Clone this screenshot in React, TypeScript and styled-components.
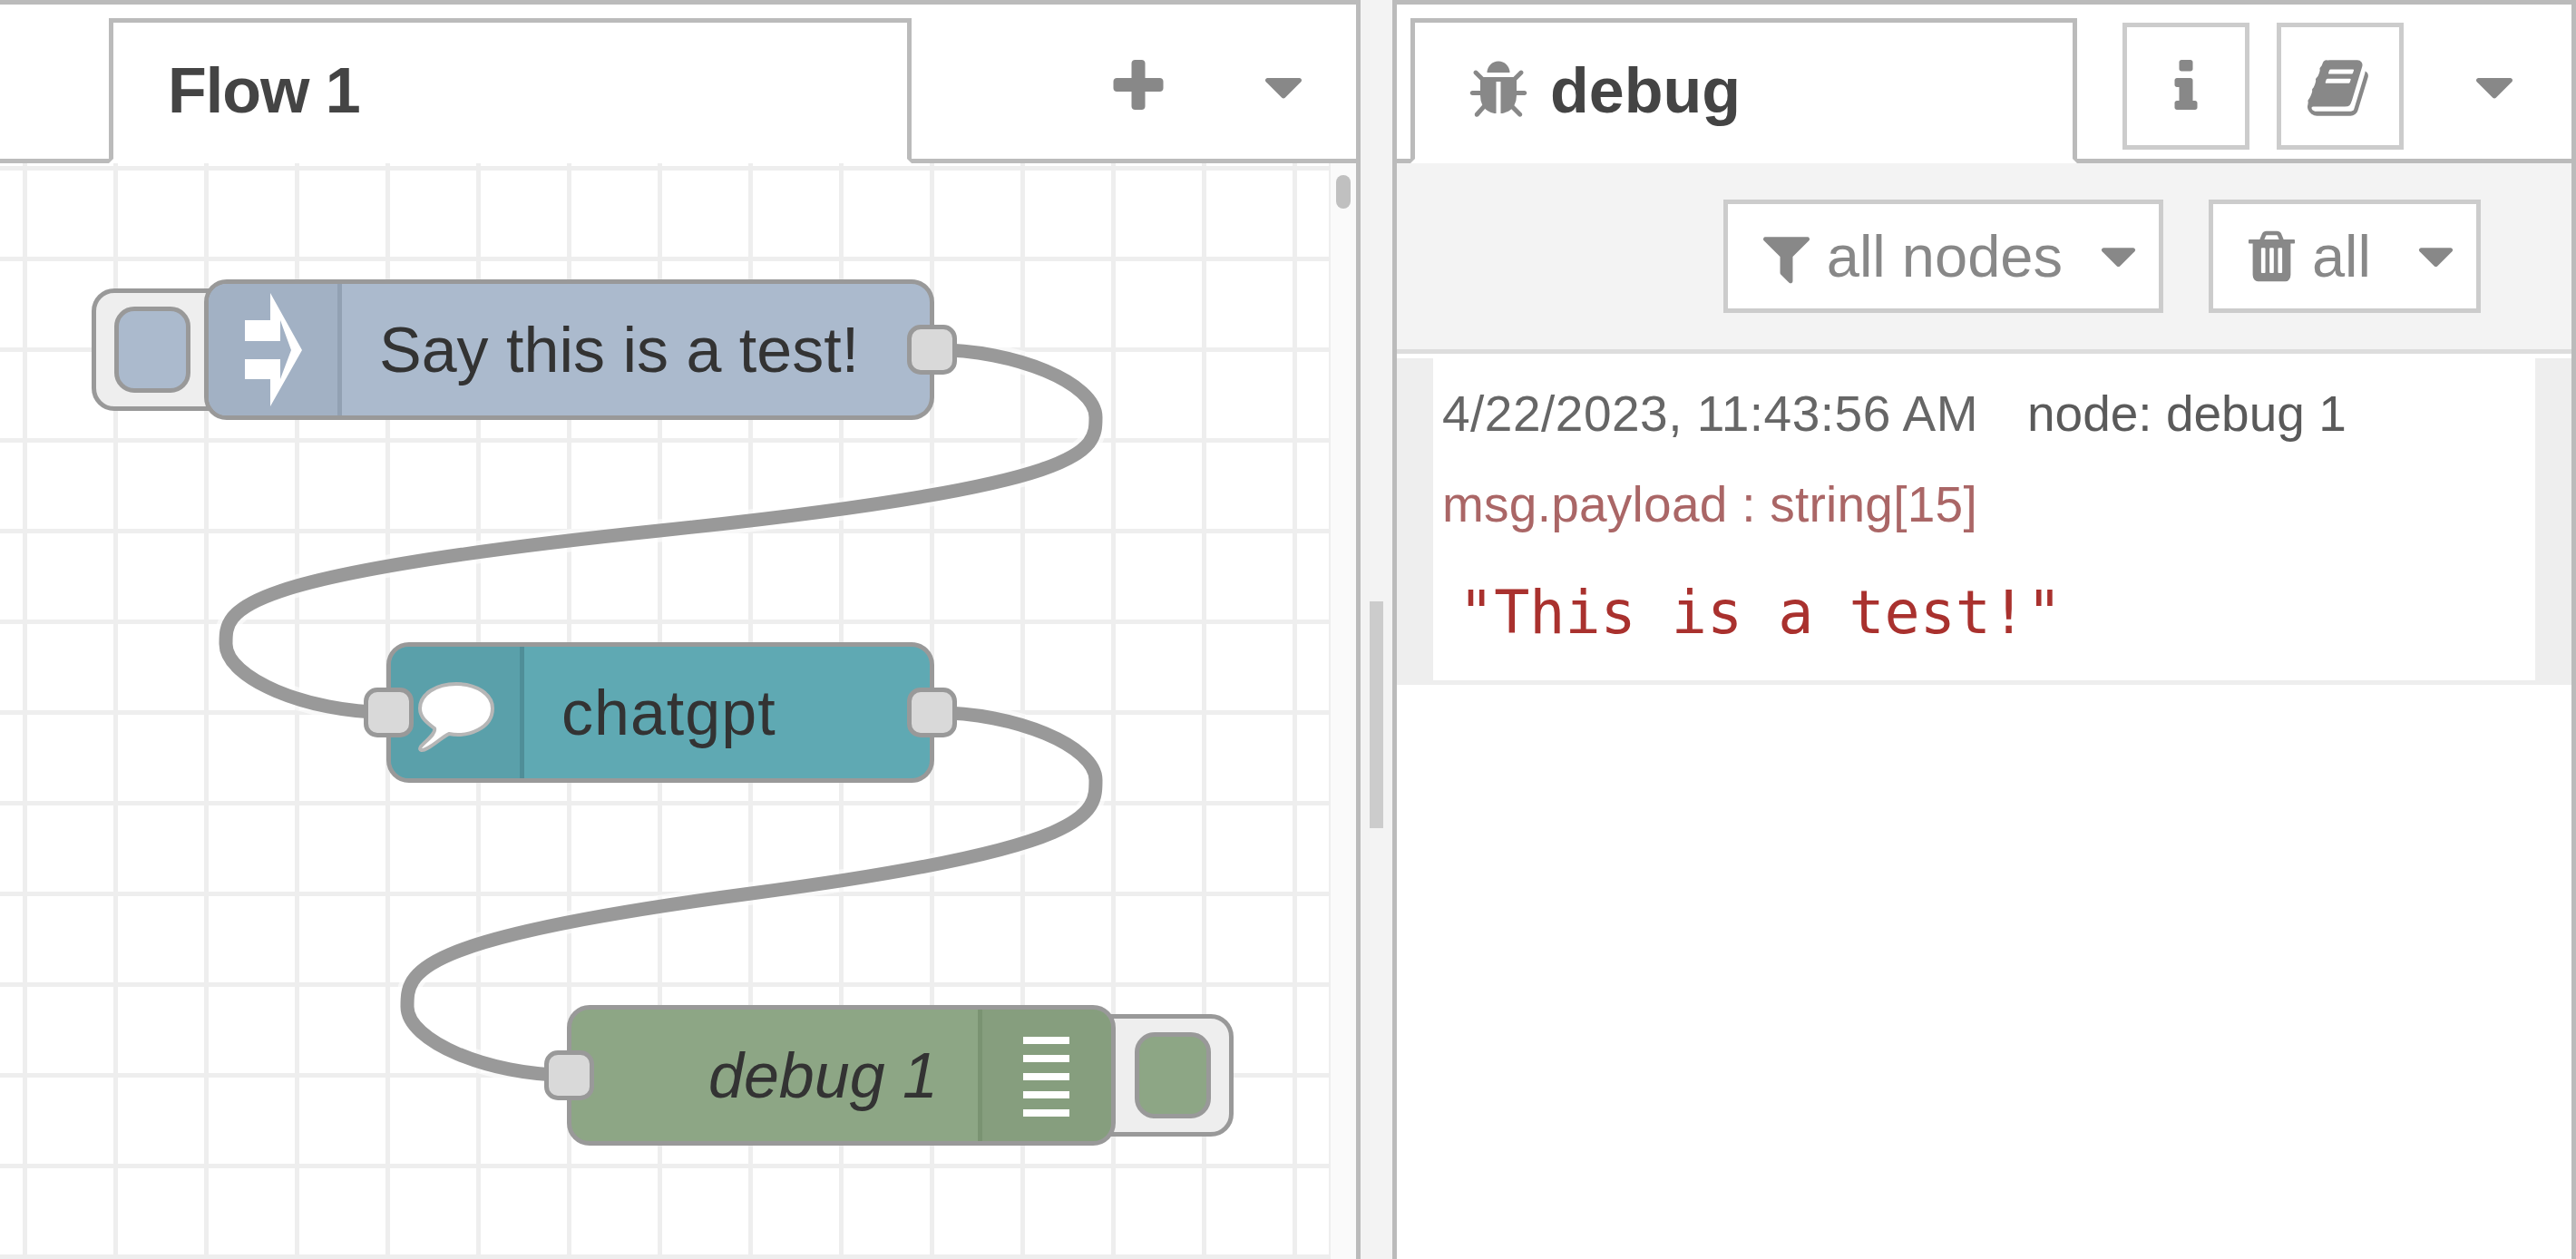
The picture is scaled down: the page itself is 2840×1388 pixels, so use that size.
import styled, { createGlobalStyle } from 'styled-components';

const GlobalStyle = createGlobalStyle`
  html, body {
    margin: 0;
    height: 100%;
    background: #fff;
    overflow: hidden;
  }
  body {
    font-family: "Liberation Sans", Arial, sans-serif;
  }
  * {
    box-sizing: border-box;
  }
`;

const Page = styled.div`
  display: flex;
  width: 2840px;
  height: 1388px;
`;

const Workspace = styled.section`
  width: 1500px;
  display: flex;
  flex-direction: column;
  border-right: 5px solid #bbb;
`;

const Sidebar = styled.section`
  width: 1305px;
  display: flex;
  flex-direction: column;
  border-left: 5px solid #bbb;
  border-right: 5px solid #bbb;
`;

const Separator = styled.div`
  width: 35px;
  background: #f3f3f3;
  padding: 188px 0 0 10px;
  display: flex;
  align-items: center;
`;

const SeparatorHandle = styled.div`
  width: 15px;
  height: 250px;
  background: #ccc;
`;

const TabBar = styled.header<{ $inset: number }>`
  height: 180px;
  flex: none;
  display: flex;
  align-items: center;
  padding: 10px 0 0 ${(p) => p.$inset}px;
  border-top: 5px solid #bbb;
  border-bottom: 5px solid #bbb;
  background: #fff;
`;

const Tab = styled.div<{ $width: number; $pad: number; $tracking?: number }>`
  width: ${(p) => p.$width}px;
  height: 160px;
  align-self: flex-end;
  margin-bottom: -5px;
  display: flex;
  align-items: center;
  gap: 22px;
  padding-left: ${(p) => p.$pad}px;
  border: 5px solid #bbb;
  border-bottom-color: #fff;
  background: #fff;
  color: #444;
  font-size: 70px;
  font-weight: 700;
  letter-spacing: ${(p) => p.$tracking ?? 0}px;
  position: relative;
`;

const Icon = styled.svg<{ $size?: number; $left?: number; $top?: number }>`
  width: ${(p) => p.$size ?? 70}px;
  height: ${(p) => p.$size ?? 70}px;
  flex: none;
  fill: #888;
  margin-left: ${(p) => p.$left ?? 0}px;
  margin-top: ${(p) => p.$top ?? 0}px;
`;

const TabIconButton = styled.div<{ $left: number }>`
  width: 140px;
  height: 140px;
  margin-left: ${(p) => p.$left}px;
  display: flex;
  align-items: center;
  justify-content: center;
  border: 5px solid #ccc;
  margin-bottom: 0;
  align-self: flex-start;
  margin-top: 10px;
`;

const Chart = styled.div`
  flex: 1;
  display: flex;
  min-height: 0;
`;

const Canvas = styled.div`
  position: relative;
  width: 1465px;
  overflow: hidden;
  background-color: #fff;
  background-image: linear-gradient(to right, #eee 5px, transparent 5px),
    linear-gradient(to bottom, #eee 5px, transparent 5px);
  background-size: 100px 100px;
  background-position: 25px 0, 0 3px;
`;

const ScrollTrack = styled.div`
  flex: 1;
  background: #fafafa;
  border-left: 2px solid #eee;
  padding: 13px 0 0 6px;
`;

const ScrollThumb = styled.div`
  width: 16px;
  height: 37px;
  border-radius: 8px;
  background: #c0c0c0;
`;

const Wires = styled.svg`
  position: absolute;
  left: 0;
  top: 0;
  width: 1465px;
  height: 1208px;
  fill: none;
`;

const WireOutline = styled.path`
  stroke: #fff;
  stroke-width: 25;
  opacity: 0.6;
`;

const WireLine = styled.path`
  stroke: #999;
  stroke-width: 15;
`;

const NodeFrame = styled.div<{ $x: number; $y: number; $width: number }>`
  position: absolute;
  left: ${(p) => p.$x}px;
  top: ${(p) => p.$y}px;
  width: ${(p) => p.$width}px;
  height: 155px;
`;

const NodeBody = styled.div<{ $fill: string }>`
  position: relative;
  height: 100%;
  display: flex;
  overflow: hidden;
  border: 5px solid #999;
  border-radius: 25px;
  background: ${(p) => p.$fill};
`;

const NodeIconCell = styled.div<{ $fill: string; $line: string; $right?: boolean }>`
  width: 147px;
  flex: none;
  background: ${(p) => p.$fill};
  border-${(p) => (p.$right ? 'left' : 'right')}: 5px solid ${(p) => p.$line};
  svg {
    display: block;
    width: 142px;
    height: 145px;
  }
`;

const NodeLabel = styled.div<{ $italic?: boolean; $tracking?: number }>`
  flex: 1;
  display: flex;
  align-items: center;
  justify-content: ${(p) => (p.$italic ? 'flex-end' : 'flex-start')};
  padding: ${(p) => (p.$italic ? '0 44px 0 0' : '0 0 0 41px')};
  color: #333;
  font-size: 70px;
  font-style: ${(p) => (p.$italic ? 'italic' : 'normal')};
  letter-spacing: ${(p) => p.$tracking ?? 0}px;
  white-space: nowrap;
`;

const Port = styled.div<{ $side: 'left' | 'right' }>`
  position: absolute;
  top: 50px;
  ${(p) => p.$side}: -25px;
  width: 55px;
  height: 55px;
  border: 5px solid #999;
  border-radius: 15px;
  background: #d9d9d9;
`;

const NodeButton = styled.div<{ $side: 'left' | 'right' }>`
  position: absolute;
  top: 10px;
  ${(p) => p.$side}: ${(p) => (p.$side === 'left' ? -124 : -130)}px;
  width: 170px;
  height: 135px;
  display: flex;
  justify-content: ${(p) => (p.$side === 'left' ? 'flex-start' : 'flex-end')};
  padding: 15px 20px;
  border: 5px solid #999;
  border-radius: 25px;
  background: #eee;
`;

const NodeButtonFace = styled.div<{ $fill: string }>`
  width: 84px;
  height: 95px;
  border: 5px solid #999;
  border-radius: 22px;
  background: ${(p) => p.$fill};
`;

const Toolbar = styled.div`
  height: 210px;
  flex: none;
  display: flex;
  justify-content: flex-end;
  gap: 50px;
  padding: 40px 100px 0 0;
  background: #f3f3f3;
  border-bottom: 5px solid #ddd;
`;

const FilterButton = styled.div`
  height: 125px;
  display: flex;
  align-items: center;
  padding: 0 12px 0 32px;
  gap: 12px;
  border: 5px solid #ccc;
  background: #fff;
  color: #888;
  font-size: 65px;
  white-space: nowrap;
`;

const Messages = styled.div`
  flex: 1;
  padding-top: 5px;
  background: #fff;
`;

const Message = styled.article`
  height: 360px;
  padding: 31px 0 0 10px;
  border-left: 40px solid #eee;
  border-right: 40px solid #eee;
  border-bottom: 5px solid #eee;
  font-size: 55px;
`;

const MessageMeta = styled.div`
  height: 60px;
  line-height: 60px;
  margin-bottom: 40px;
  color: #666;
  letter-spacing: 0.5px;
  white-space: nowrap;
`;

const MessageNode = styled.span`
  margin-left: 54px;
  color: #5a5a5a;
  letter-spacing: 0;
`;

const MessageTopic = styled.div`
  height: 60px;
  line-height: 60px;
  margin-bottom: 55px;
  color: #a66;
  letter-spacing: 0.25px;
  white-space: nowrap;
`;

const MessageValue = styled.div`
  height: 70px;
  line-height: 70px;
  padding-left: 18px;
  color: #a9312e;
  font-family: "DejaVu Sans Mono", "Liberation Mono", monospace;
  font-size: 65px;
  white-space: pre;
`;

const plus =
  'M1600 736v192q0 40-28 68t-68 28h-416v416q0 40-28 68t-68 28h-192q-40 0-68-28t-28-68v-416h-416q-40 0-68-28t-28-68v-192q0-40 28-68t68-28h416v-416q0-40 28-68t68-28h192q40 0 68 28t28 68v416h416q40 0 68 28t28 68z';
const caret =
  'M1408 704q0 26-19 45l-448 448q-19 19-45 19t-45-19l-448-448q-19-19-19-45t19-45 45-19h896q26 0 45 19t19 45z';
const bug =
  'M1696 960q0 26-19 45t-45 19h-224q0 171-67 290l208 209q19 19 19 45t-19 45q-18 19-45 19t-45-19l-198-197q-5 5-15 13t-42 28.5-65 36.5-82 29-97 13v-896h-128v896q-51 0-101.500-13.500t-87-33-66-39-43.500-32.500l-15-14-183 207q-20 21-48 21-24 0-43-16-19-18-20.500-44.500t15.500-46.500l202-227q-58-114-58-274h-224q-26 0-45-19t-19-45 19-45 45-19h224v-294l-173-173q-19-19-19-45t19-45 45-19 45 19l173 173h844l173-173q19-19 45-19t45 19 19 45-19 45l-173 173v294h224q26 0 45 19t19 45zm-480-576h-640q0-133 93.500-226.500t226.500-93.500 226.500 93.500 93.500 226.500z';
const info =
  'M1216 1344v128q0 26-19 45t-45 19h-512q-26 0-45-19t-19-45v-128q0-26 19-45t45-19h64v-384h-64q-26 0-45-19t-19-45v-128q0-26 19-45t45-19h384q26 0 45 19t19 45v576h64q26 0 45 19t19 45zm-128-1152v192q0 26-19 45t-45 19h-256q-26 0-45-19t-19-45v-192q0-26 19-45t45-19h256q26 0 45 19t19 45z';
const book =
  'M1639 478q40 57 18 129l-275 906q-19 64-76.500 107.500t-122.500 43.500h-923q-77 0-148.500-53.500t-99.500-131.500q-24-67-2-127 0-4 3-27t4-37q1-8-3-21.500t-3-19.500q2-11 8-21t16.500-23.500 16.500-23.500q23-38 45-91.500t30-91.500q3-10 .5-30t-.5-28q3-11 17-28t17-23q21-36 42-92t25-90q1-9-2.500-32t.5-28q4-13 22-30.500t22-22.500q19-26 42.500-84.500t27.500-96.500q1-8-3-25.500t-2-26.500q2-8 9-18t18-23 17-21q8-12 16.500-30.500t15-35 16-36 19.500-32 26.500-23.500 36-11.500 47.500 5.500l-1 3q38-9 51-9h761q74 0 114 56t18 130l-274 906q-36 119-71.500 153.500t-128.500 34.500h-869q-27 0-38 15-11 16-1 43 24 70 144 70h923q29 0 56-15.500t35-41.500l300-987q7-22 5-57 38 15 59 43zm-1064 2q-4 13 2 22.500t20 9.500h608q13 0 25.500-9.500t16.500-22.500l21-64q4-13-2-22.500t-20-9.500h-608q-13 0-25.500 9.500t-16.500 22.500zm-83 256q-4 13 2 22.500t20 9.500h608q13 0 25.500-9.500t16.500-22.500l21-64q4-13-2-22.500t-20-9.500h-608q-13 0-25.500 9.500t-16.500 22.500z';
const filter =
  'M1595 295q17 41-14 70l-493 493v742q0 42-39 59-13 5-25 5-27 0-45-19l-256-256q-19-19-19-45v-486l-493-493q-31-29-14-70 17-39 59-39h1280q42 0 59 39z';
const trash =
  'M704 1376v-704q0-14-9-23t-23-9h-64q-14 0-23 9t-9 23v704q0 14 9 23t23 9h64q14 0 23-9t9-23zm256 0v-704q0-14-9-23t-23-9h-64q-14 0-23 9t-9 23v704q0 14 9 23t23 9h64q14 0 23-9t9-23zm256 0v-704q0-14-9-23t-23-9h-64q-14 0-23 9t-9 23v704q0 14 9 23t23 9h64q14 0 23-9t9-23zm-544-992h448l-48-117q-7-9-17-11h-317q-10 2-17 11zm928 32v64q0 14-9 23t-23 9h-96v948q0 83-47 143.500t-113 60.500h-832q-66 0-113-58.500t-47-141.500v-952h-96q-14 0-23-9t-9-23v-64q0-14 9-23t23-9h309l70-167q15-37 54-63t79-26h320q40 0 79 26t54 63l70 167h309q14 0 23 9t9 23z';

function Glyph(props: { d: string; size?: number; left?: number; top?: number }) {
  return (
    <Icon viewBox="0 0 1792 1792" $size={props.size} $left={props.left} $top={props.top}>
      <path d={props.d} />
    </Icon>
  );
}

const wires = [
  'M1030 385.5 C1119 385.5 1208 422.5 1208 460 S1208 535 727 585 S249 672.5 249 710 S338 785.5 427 785.5',
  'M1030 785.5 C1119 785.5 1208 822.5 1208 860 S1208 935 828 985 S449 1072.5 449 1110 S538 1185.5 627 1185.5',
];

function App() {
  return (
    <>
      <GlobalStyle />
      <Page>
        <Workspace>
          <TabBar $inset={120}>
            <Tab $width={885} $pad={60} $tracking={-1}>Flow 1</Tab>
            <Glyph d={plus} left={215} top={2} />
            <Glyph d={caret} left={90} top={2} />
          </TabBar>
          <Chart>
            <Canvas>
              <Wires viewBox="0 180 1465 1208">
                {wires.map((d) => (
                  <g key={d}>
                    <WireOutline d={d} />
                    <WireLine d={d} />
                  </g>
                ))}
              </Wires>

              <NodeFrame $x={225} $y={128} $width={805}>
                <NodeButton $side="left">
                  <NodeButtonFace $fill="#abbacd" />
                </NodeButton>
                <NodeBody $fill="#abbacd">
                  <NodeIconCell $fill="#a2b1c4" $line="#92a1b3">
                    <svg viewBox="0 0 142 145">
                      <path
                        fill="#fff"
                        d="M68 10 L103 73 L68 135 L68 105 L40 105 L40 83 L79 83 L79 105 L91 73 L79 40 L79 63 L40 63 L40 40 L68 40 Z"
                      />
                    </svg>
                  </NodeIconCell>
                  <NodeLabel>Say this is a test!</NodeLabel>
                </NodeBody>
                <Port $side="right" />
              </NodeFrame>

              <NodeFrame $x={426} $y={528} $width={604}>
                <NodeBody $fill="#5fa9b3">
                  <NodeIconCell $fill="#5aa0aa" $line="#4f8e98">
                    <svg viewBox="0 0 142 145">
                      <path
                        fill="#fff"
                        stroke="#b6b6b6"
                        strokeWidth="4"
                        d="M48 90 C50 96 38 104 33 110 C30 115 35 115 40 112 C48 108 56 100 64 96 C85 100 112 90 112 68 C112 52 94 41 72 41 C50 41 32 52 32 68 C32 78 40 84 48 90 Z"
                      />
                    </svg>
                  </NodeIconCell>
                  <NodeLabel $tracking={1}>chatgpt</NodeLabel>
                </NodeBody>
                <Port $side="left" />
                <Port $side="right" />
              </NodeFrame>

              <NodeFrame $x={625} $y={928} $width={605}>
                <NodeButton $side="right">
                  <NodeButtonFace $fill="#8da685" />
                </NodeButton>
                <NodeBody $fill="#8da685">
                  <NodeLabel $italic>debug 1</NodeLabel>
                  <NodeIconCell $fill="#869e7e" $line="#7a9372" $right>
                    <svg viewBox="0 0 142 145">
                      {[30, 50, 70, 90, 110].map((y) => (
                        <rect key={y} x="45" y={y} width="51" height="8" fill="#fff" />
                      ))}
                    </svg>
                  </NodeIconCell>
                </NodeBody>
                <Port $side="left" />
              </NodeFrame>
            </Canvas>
            <ScrollTrack>
              <ScrollThumb />
            </ScrollTrack>
          </Chart>
        </Workspace>

        <Separator>
          <SeparatorHandle />
        </Separator>

        <Sidebar>
          <TabBar $inset={15}>
            <Tab $width={735} $pad={57}>
              <Glyph d={bug} />
              debug
            </Tab>
            <TabIconButton $left={50}>
              <Glyph d={info} top={2} />
            </TabIconButton>
            <TabIconButton $left={30}>
              <Glyph d={book} size={72} top={4} />
            </TabIconButton>
            <Glyph d={caret} left={65} top={2} />
          </TabBar>
          <Toolbar>
            <FilterButton>
              <Glyph d={filter} size={65} top={4} />
              all nodes
              <Glyph d={caret} size={65} left={17} />
            </FilterButton>
            <FilterButton>
              <Glyph d={trash} size={65} />
              all
              <Glyph d={caret} size={65} left={27} />
            </FilterButton>
          </Toolbar>
          <Messages>
            <Message>
              <MessageMeta>
                4/22/2023, 11:43:56 AM<MessageNode>node: debug 1</MessageNode>
              </MessageMeta>
              <MessageTopic>msg.payload : string[15]</MessageTopic>
              <MessageValue>"This is a test!"</MessageValue>
            </Message>
          </Messages>
        </Sidebar>
      </Page>
    </>
  );
}

export default App;
